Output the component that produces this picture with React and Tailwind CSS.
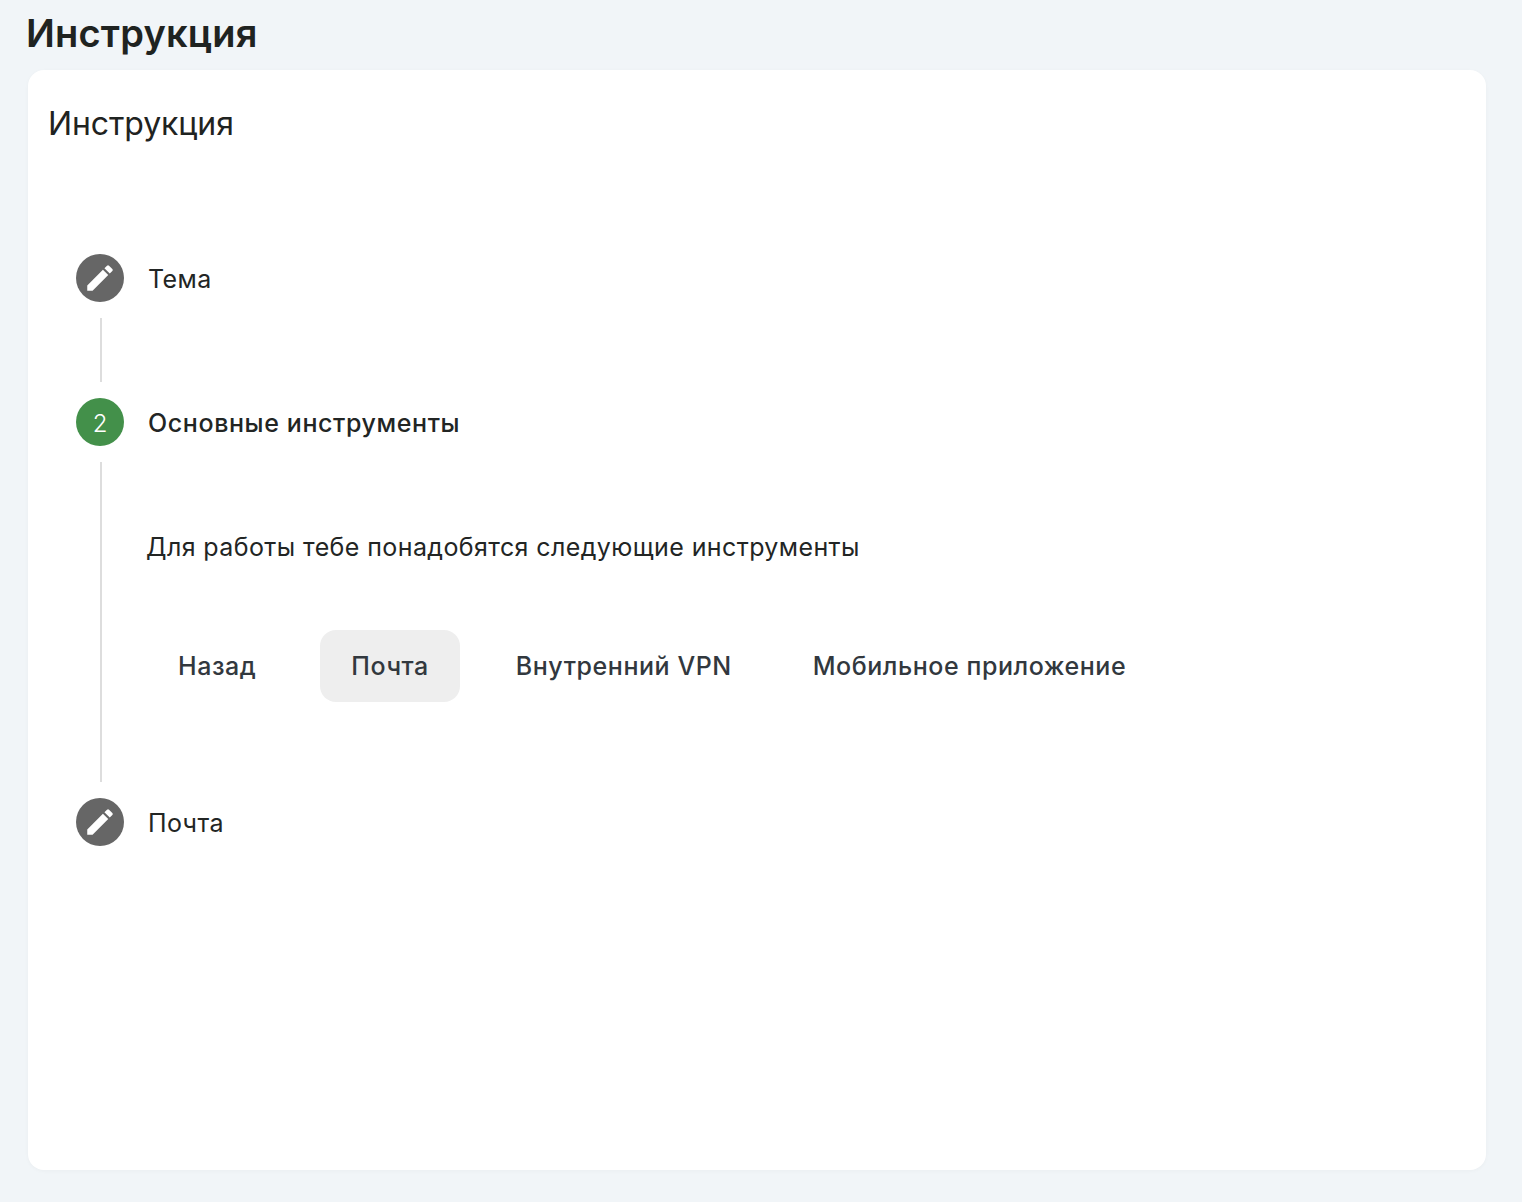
const Pencil = () => (
  <svg viewBox="0 0 24 24" className="w-[34px] h-[34px]" fill="#fff">
    <path d="M3 17.25V21h3.75L17.81 9.94l-3.75-3.75L3 17.25zM20.71 7.04a.996.996 0 0 0 0-1.41l-2.34-2.34a.996.996 0 0 0-1.41 0l-1.83 1.83 3.75 3.75 1.83-1.83z" />
  </svg>
);

const Step = ({ icon, green, active, label }) => (
  <div className="flex items-center h-12">
    <div className={`w-12 h-12 rounded-full flex items-center justify-center text-white text-[24px] font-light ${green ? "bg-[#43904a] pt-[3px]" : "bg-[#666666]"}`}>
      {icon}
    </div>
    <span className={`ml-6 pt-[4px] text-[25px] text-[#222524] ${active ? "font-[450] tracking-[0.6px]" : "font-normal tracking-[0.4px]"}`}>{label}</span>
  </div>
);

const Tab = ({ children, selected, className = "" }) => (
  <button className={`h-[72px] pt-[2px] rounded-[16px] text-[25px] font-[450] tracking-[0.55px] text-[#32383e] ${selected ? "bg-[#eeeeee]" : ""} ${className}`}>
    {children}
  </button>
);

export default function App() {
  return (
    <div className="min-h-[1202px] bg-[#f1f5f8] pt-[8px] pl-[28px] pr-[36px] font-['Inter',sans-serif]">
      <h1 className="-ml-[2px] h-[62px] text-[38px] leading-[50px] font-semibold tracking-[0.2px] text-[#1f2321]">Инструкция</h1>
      <div className="h-[1100px] bg-white rounded-[16px] shadow-[0_1px_4px_rgba(0,0,0,0.03)] pt-[29px] pl-[20px]">
        <h2 className="text-[32px] leading-[50px] font-normal tracking-[-0.1px] text-[#1f2321]">Инструкция</h2>
        <div className="mt-[105px] pl-[28px]">
          <Step icon={<Pencil />} label="Тема" />
          <div className="ml-[24px] my-4 h-16 w-0.5 bg-[#dddddd]" />
          <Step icon="2" green active label="Основные инструменты" />
          <div className="ml-[24px] my-4 h-[320px] border-l-2 border-[#dddddd] pl-[45px] pt-[66px]">
            <p className="-ml-[1px] text-[25px] leading-[38px] tracking-[0.4px] text-[#222524]">Для работы тебе понадобятся следующие инструменты</p>
            <div className="mt-[64px] flex items-center">
              <Tab className="px-[31px]">Назад</Tab>
              <Tab selected className="ml-[33px] px-[31px]">Почта</Tab>
              <Tab className="ml-[25px] px-[31px]">Внутренний VPN</Tab>
              <Tab className="ml-[19px] px-[31px]">Мобильное приложение</Tab>
            </div>
          </div>
          <Step icon={<Pencil />} label="Почта" />
        </div>
      </div>
    </div>
  );
}
